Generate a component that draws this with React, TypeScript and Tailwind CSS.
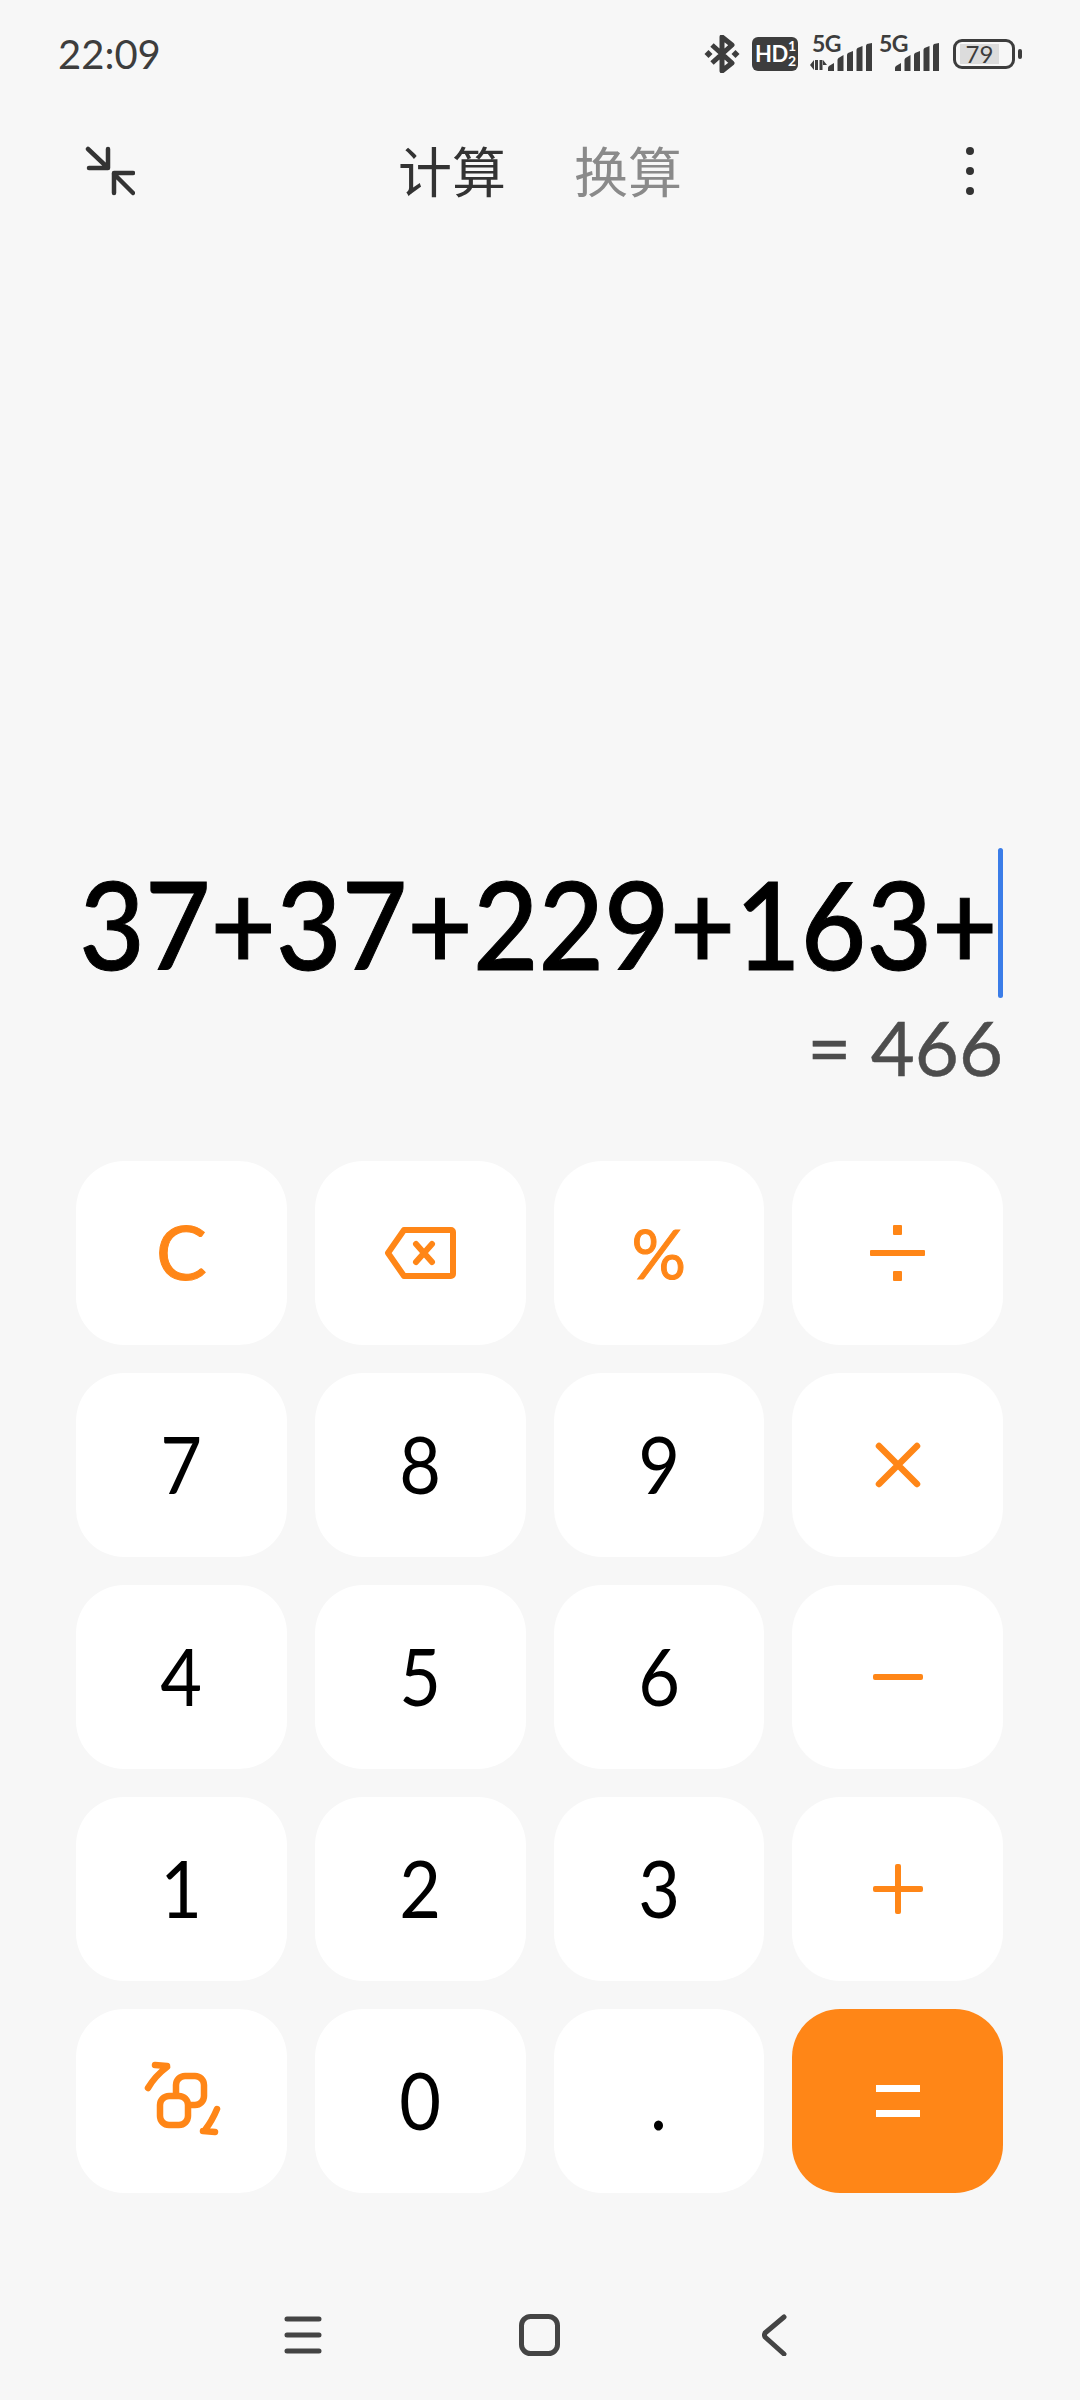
const orange = "#ff8617";

const Bars = () => (
  <svg width="44" height="28" viewBox="0 0 44 28" fill="#3d3d3d" aria-hidden="true">
    <path d="M0 28v-3q0-1 1-2l5-3v8z" />
    <path d="M9.5 28V17q0-1 1-2l5-3v16z" />
    <path d="M19 28V12q0-1 1-2l5-2v20z" />
    <path d="M28.5 28V7q0-1 1-2l5-2v25z" />
    <path d="M38 28V3q0-1 1-2l5-1v28z" />
  </svg>
);

const SimCell = ({ arrows }: { arrows?: boolean }) => (
  <div className={`relative h-[34px] ${arrows ? "w-[62px]" : "w-[60px]"}`}>
    <span className={`absolute top-[-7px] text-[23px] leading-[26px] font-bold tracking-[-0.5px] text-[#3d3d3d] ${arrows ? "left-[2px]" : "left-0"}`}>5G</span>
    {arrows && (
      <svg className="absolute left-0 bottom-0" width="17" height="12" viewBox="0 0 17 12" fill="#3d3d3d" aria-hidden="true">
        <path d="M0 6l4-5v10zM5 1h3v10H5zM9.500 1h3v10h-3zM13 1l4 5h-4z" />
      </svg>
    )}
    <div className="absolute right-0 bottom-0">
      <Bars />
    </div>
  </div>
);

const StatusIcons = () => (
  <div className="flex items-center">
    <svg width="36" height="38" viewBox="0 0 36 38" fill="none" stroke="#3d3d3d" strokeWidth="5" strokeLinejoin="round" aria-hidden="true">
      <path d="M8 10l20 18-10 8V2l10 8L8 28" />
      <path d="M0.500 19l4-4 4 4-4 4zM27.500 19l4-4 4 4-4 4z" fill="#3d3d3d" stroke="none" />
    </svg>
    <div className="ml-[12px] w-[46px] h-[34px] rounded-[6px] bg-[#3d3d3d] text-white flex items-center pl-[3px] relative">
      <span className="text-[22px] leading-none font-bold tracking-[-0.5px]">HD</span>
      <div className="absolute right-[2px] top-[1px] flex flex-col items-center text-[14px] leading-[15px] font-bold">
        <span>1</span>
        <span>2</span>
      </div>
    </div>
    <div className="ml-[12px]">
      <SimCell arrows />
    </div>
    <div className="ml-[7px]">
      <SimCell />
    </div>
    <div className="ml-[14px] w-[62px] h-[30px] rounded-[9px] border-[3px] border-[#3d3d3d] flex items-center pl-[4px]">
      <div className="w-[39px] h-[20px] bg-[#dcdcdc] text-[24px] leading-[20px] text-[#3d3d3d] text-center">79</div>
    </div>
    <div className="ml-[3px] w-[4px] h-[10px] rounded-[2px] bg-[#3d3d3d]" />
  </div>
);

const CollapseIcon = () => (
  <svg className="shrink-0" width="50" height="50" viewBox="0 0 50 50" fill="none" stroke="#333" strokeWidth="4.500" strokeLinecap="round" strokeLinejoin="round" aria-hidden="true">
    <path d="M3 3l19 18M23 3v19H4" />
    <path d="M48 47L29 28M29 47V27h19" />
  </svg>
);

const Key = ({ children, label, accent }: { children: React.ReactNode; label?: string; accent?: boolean }) => (
  <button
    aria-label={label}
    className={`h-[184px] rounded-[48px] flex items-center justify-center ${accent ? "bg-[#ff8617]" : "bg-white"}`}
  >
    {children}
  </button>
);

const Digit = ({ value }: { value: string }) => (
  <Key>
    <span className="text-[80px] leading-none text-black pb-[4px] scale-x-[0.9]">{value}</span>
  </Key>
);

const Op = ({ label, children }: { label: string; children: React.ReactNode }) => (
  <Key label={label}>
    <svg width="72" height="72" viewBox="0 0 72 72" fill={orange} stroke="none" aria-hidden="true">
      {children}
    </svg>
  </Key>
);

export default function App() {
  return (
    <div className="w-[1080px] h-[2400px] bg-[#f7f7f7] flex flex-col overflow-hidden [font-family:Lato,'Noto_Sans_CJK_SC',sans-serif]">
      {/* status bar */}
      <div className="h-[108px] shrink-0 flex items-center justify-between pl-[58px] pr-[58px]">
        <span className="text-[40px] leading-none text-[#3d3d3d]">22:09</span>
        <StatusIcons />
      </div>

      {/* header */}
      <div className="h-[126px] shrink-0 flex items-center pl-[85px] pr-[106px]">
        <CollapseIcon />
        <div className="ml-[263px] pb-[3px] flex items-center gap-[68px] text-[54px] leading-none [font-family:'Noto_Sans_CJK_SC',sans-serif]">
          <span className="text-[#333]">计算</span>
          <span className="text-[#8a8a8a]">换算</span>
        </div>
        <div className="ml-auto flex flex-col items-center gap-[12px]">
          <div className="w-[8px] h-[8px] rounded-full bg-[#333]" />
          <div className="w-[8px] h-[8px] rounded-full bg-[#333]" />
          <div className="w-[8px] h-[8px] rounded-full bg-[#333]" />
        </div>
      </div>

      {/* display */}
      <div className="flex-1 flex flex-col justify-end pr-[77px] pb-[76px]">
        <div className="flex items-center justify-end h-[150px]">
          <span className="text-[122px] leading-none font-medium text-black whitespace-nowrap scale-x-[0.927] origin-right [-webkit-text-stroke:1px_#000]">37+37+229+163+</span>
          <div className="w-[5px] h-[150px] rounded-full bg-[#3b7de8]" />
        </div>
        <div className="mt-[11px] h-[76px] flex items-center justify-end text-[76px] leading-none text-[#4d4d4d] [-webkit-text-stroke:0.5px_#4d4d4d]">
          = 466
        </div>
      </div>

      {/* keypad */}
      <div className="grid grid-cols-4 gap-[28px] pl-[76px] pr-[77px] shrink-0">
        <Key>
          <span className="text-[76px] leading-none pb-[4px] [-webkit-text-stroke:1px_#ff8617]" style={{ color: orange }}>C</span>
        </Key>
        <Key label="退格">
          <svg width="72" height="52" viewBox="0 0 72 52" fill="none" stroke={orange} strokeWidth="6" strokeLinejoin="round" strokeLinecap="round" aria-hidden="true">
            <path d="M20 3h47a2 2 0 0 1 2 2v42a2 2 0 0 1-2 2H20L4 26z" />
            <path d="M32 17l16 18M48 17L32 35" />
          </svg>
        </Key>
        <Key>
          <span className="text-[68px] leading-none [-webkit-text-stroke:1px_#ff8617]" style={{ color: orange }}>%</span>
        </Key>
        <Op label="除">
          <rect x="8" y="33" width="55" height="6" rx="1" />
          <rect x="31" y="8" width="9" height="10" rx="1" />
          <rect x="31" y="54" width="9" height="10" rx="1" />
        </Op>

        <Digit value="7" />
        <Digit value="8" />
        <Digit value="9" />
        <Op label="乘">
          <path d="M17 17l38 38M55 17L17 55" fill="none" stroke={orange} strokeWidth="6.500" strokeLinecap="round" />
        </Op>

        <Digit value="4" />
        <Digit value="5" />
        <Digit value="6" />
        <Op label="减">
          <rect x="11" y="33" width="50" height="6" rx="2" />
        </Op>

        <Digit value="1" />
        <Digit value="2" />
        <Digit value="3" />
        <Op label="加">
          <rect x="11" y="33" width="50" height="6" rx="2" />
          <rect x="33" y="11" width="6" height="50" rx="2" />
        </Op>

        <Key label="换算">
          <svg width="80" height="80" viewBox="0 0 80 80" fill="none" stroke={orange} strokeWidth="6.500" strokeLinecap="round" strokeLinejoin="round" aria-hidden="true">
            <rect x="35" y="15" width="28" height="29" rx="9" />
            <rect x="19" y="35" width="28" height="29" rx="9" fill="#fff" />
            <path d="M7 27Q14 15 26 6M14 4l12 1" />
            <path d="M76 48Q71 60 64 69M62 70l12 1" />
          </svg>
        </Key>
        <Digit value="0" />
        <Digit value="." />
        <Key label="等于" accent>
          <svg width="44" height="32" viewBox="0 0 44 32" fill="#fff" aria-hidden="true">
            <rect width="44" height="7" y="0" />
            <rect width="44" height="7" y="25" />
          </svg>
        </Key>
      </div>

      {/* nav bar */}
      <div className="h-[207px] shrink-0 flex items-center pl-[284px] pt-[77px]">
        <svg width="38" height="38" viewBox="0 0 38 38" fill="none" stroke="#444" strokeWidth="5" strokeLinecap="round" aria-hidden="true">
          <path d="M3 3h32M3 19h32M3 35h32" />
        </svg>
        <svg className="ml-[197px]" width="41" height="42" viewBox="0 0 41 42" fill="none" stroke="#444" strokeWidth="5" aria-hidden="true">
          <rect x="2.500" y="2.500" width="36" height="37" rx="9" />
        </svg>
        <svg className="ml-[202px]" width="25" height="42" viewBox="0 0 25 42" fill="none" stroke="#444" strokeWidth="5" strokeLinecap="round" strokeLinejoin="round" aria-hidden="true">
          <path d="M22 3L3 19q-1 2 0 4l19 17" />
        </svg>
      </div>
    </div>
  );
}
